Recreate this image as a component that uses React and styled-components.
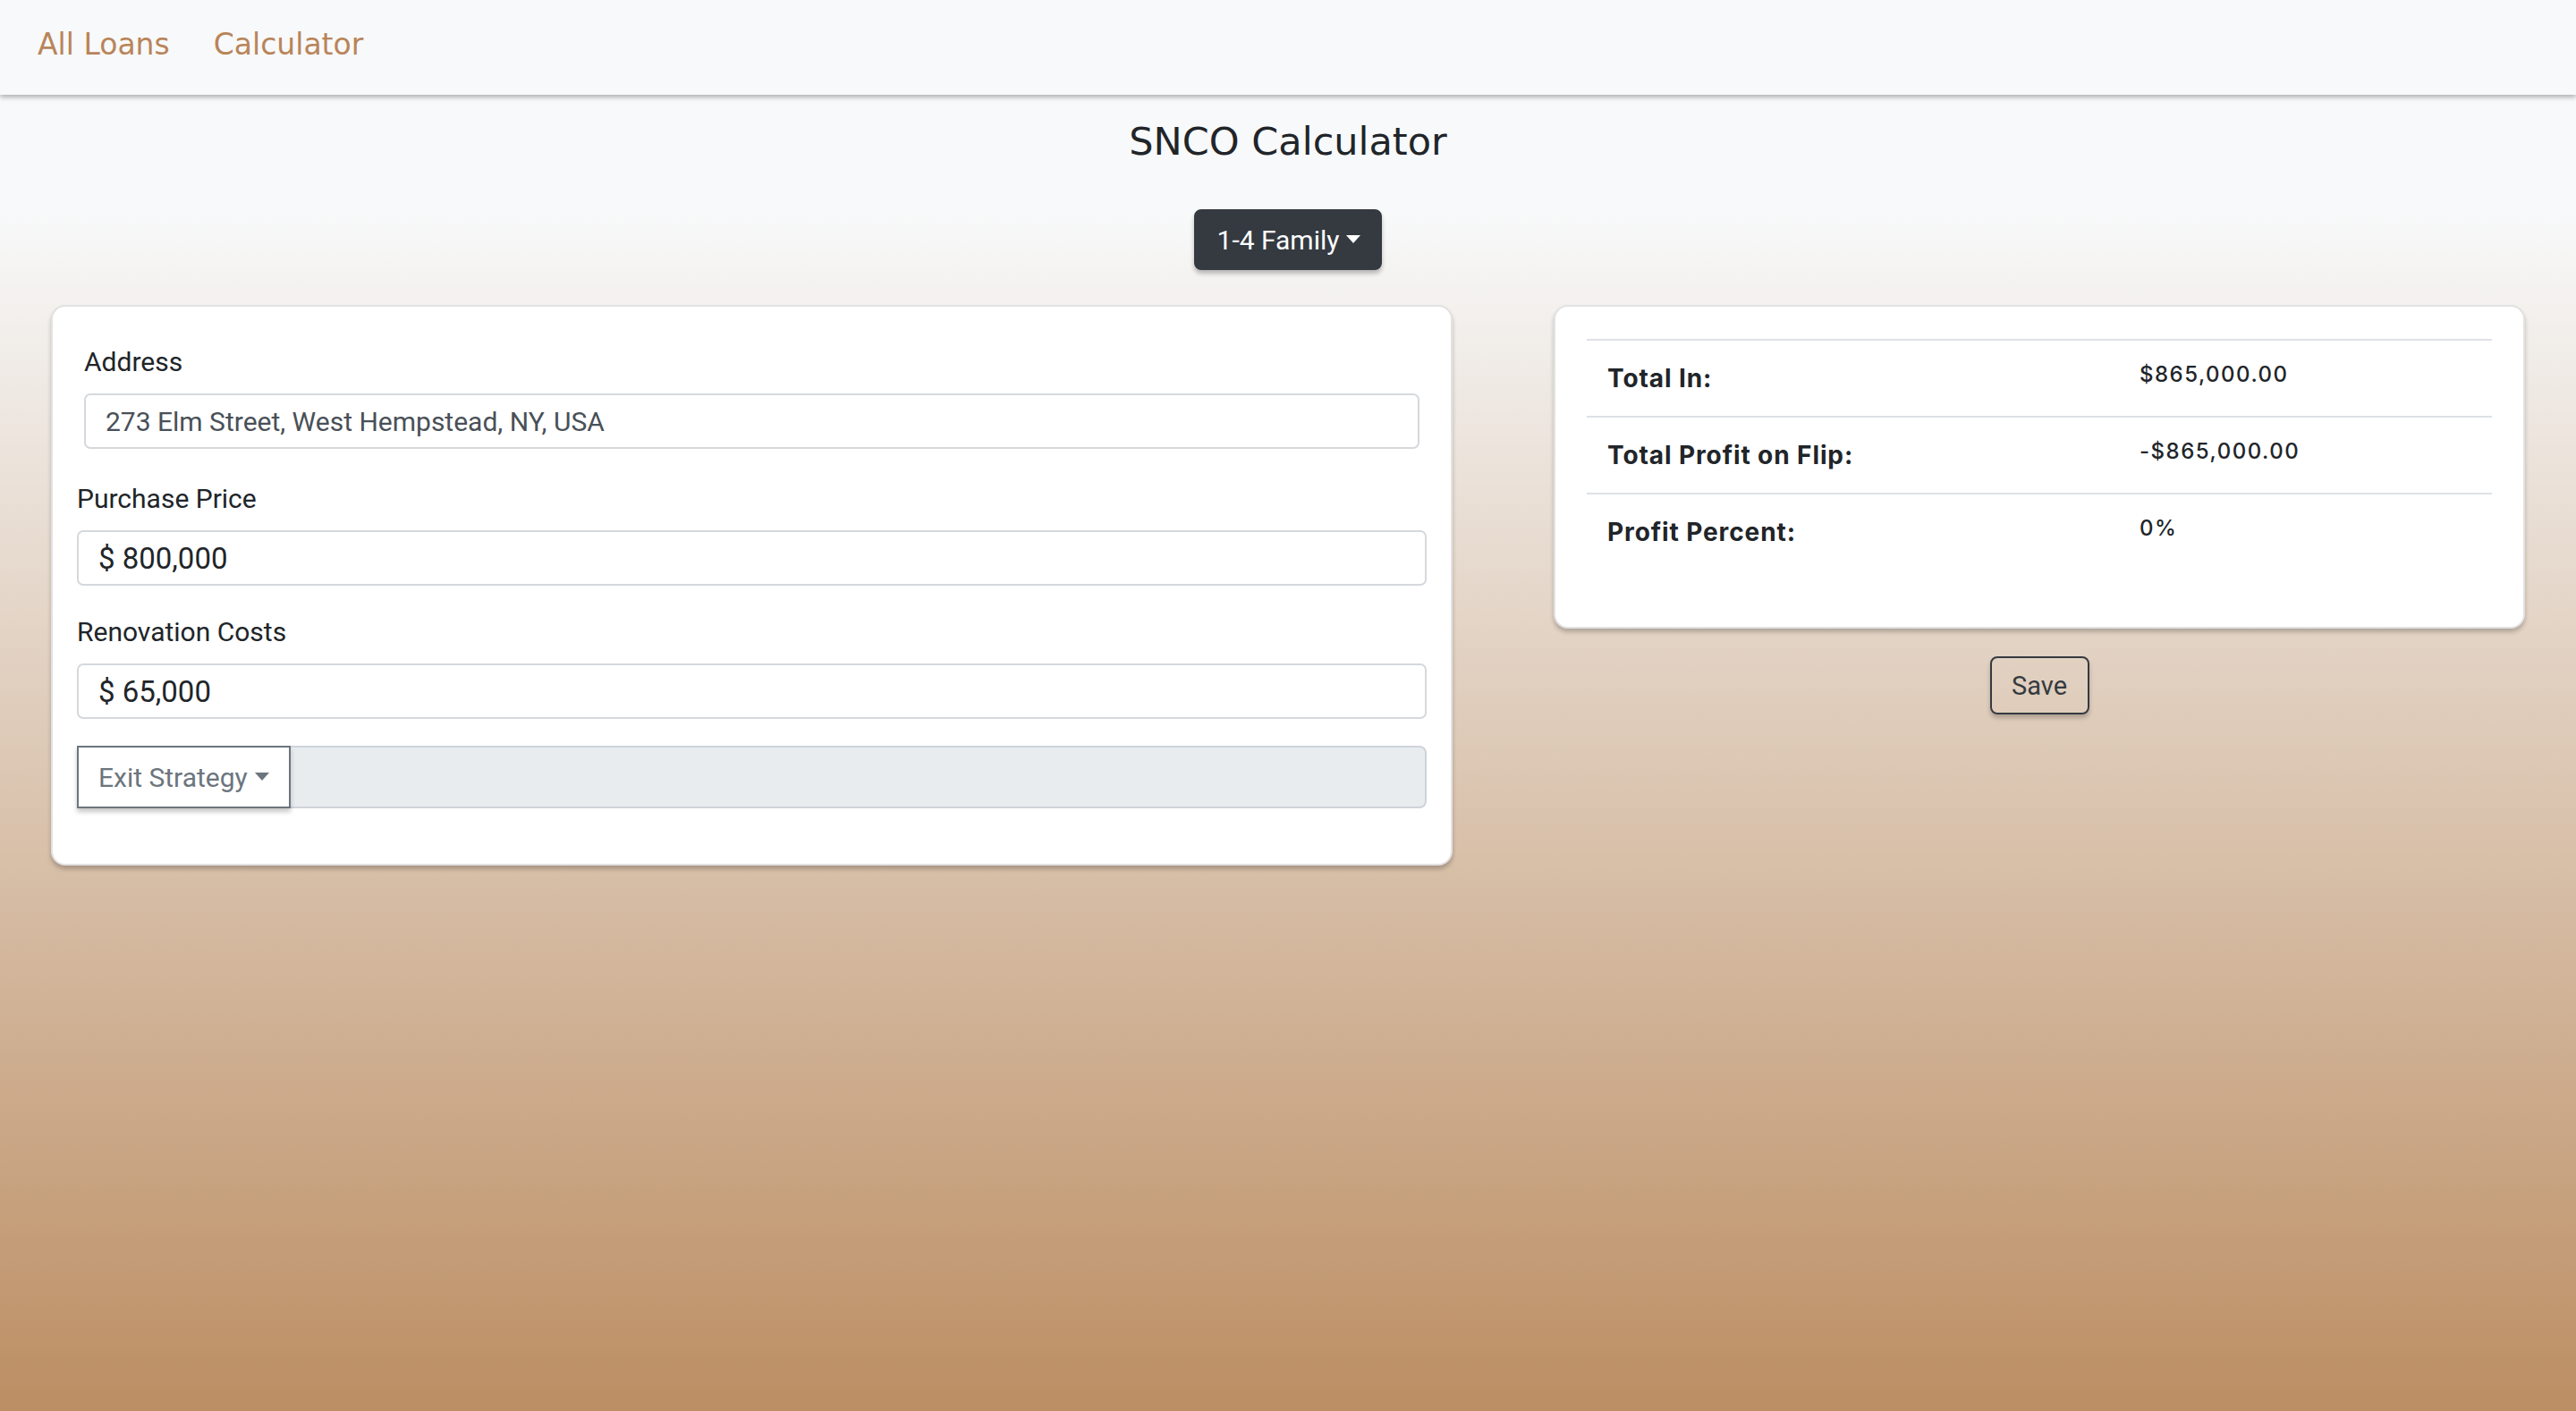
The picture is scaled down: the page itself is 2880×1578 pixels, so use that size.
import React from "react";
import styled, { createGlobalStyle } from "styled-components";

const GlobalStyle = createGlobalStyle`
  html, body { margin: 0; padding: 0; }
  body {
    font-family: Roboto, "Liberation Sans", sans-serif;
    color: #212529;
    background: #f8f9fa;
  }
  * { box-sizing: border-box; }
`;

const Page = styled.div`
  min-height: 100vh;
  background: linear-gradient(to bottom, #f8f9fa 0%, #f8f9fa 15%, #bc8e63 100%);
`;

const Navbar = styled.nav`
  height: 106px;
  background: #f8f9fa;
  box-shadow: 0 3px 5px rgba(0, 0, 0, 0.28);
  display: flex;
  align-items: flex-start;
  gap: 49px;
  padding: 30px 0 0 42px;
  position: relative;
  z-index: 2;
`;

const NavLink = styled.a`
  font-family: "DejaVu Sans", sans-serif;
  font-weight: 400;
  font-size: 33px;
  line-height: 40px;
  color: #b8855a;
  text-decoration: none;
`;

const Title = styled.h1`
  margin: 26px 0 0;
  text-align: center;
  font-family: "DejaVu Sans", sans-serif;
  font-weight: 500;
  font-size: 43px;
  line-height: 52px;
  color: #212529;
`;

const Center = styled.div`
  display: flex;
  justify-content: center;
  margin-top: 50px;
`;

const Caret = styled.span`
  display: inline-block;
  margin-left: 8px;
  vertical-align: 7px;
  border-top: 9px solid currentColor;
  border-left: 8px solid transparent;
  border-right: 8px solid transparent;
`;

const DarkButton = styled.button`
  height: 68px;
  padding: 0 22px 0 24px;
  background: #343a40;
  color: #fff;
  border: 2px solid #343a40;
  border-radius: 8px;
  font-family: Roboto, sans-serif;
  font-size: 30px;
  line-height: 45px;
  box-shadow: 0 4px 5px rgba(0, 0, 0, 0.25);
`;

const Columns = styled.div`
  display: grid;
  grid-template-columns: 1567fr 1086fr;
  column-gap: 113px;
  align-items: start;
  padding: 0 57px;
  margin-top: 39px;
`;

const Card = styled.section`
  background: #fff;
  border: 2px solid #e2e2e2;
  border-radius: 16px;
  box-shadow: 0 4px 5px rgba(0, 0, 0, 0.22);
  padding: ${(p) => p.$pad};
`;

const Group = styled.div`
  padding: ${(p) => (p.$inset ? "13px 8px 0" : "0")};
  margin-bottom: ${(p) => p.$mb}px;
`;

const Label = styled.label`
  display: block;
  font-size: 30px;
  line-height: 42px;
  margin-bottom: 14px;
  color: #212529;
`;

const Input = styled.div`
  height: 62px;
  display: flex;
  align-items: center;
  padding: 0 22px;
  border: 2px solid #d5d8dc;
  border-radius: 7px;
  background: #fff;
  font-size: ${(p) => (p.$muted ? 30 : 33)}px;
  color: ${(p) => (p.$muted ? "#495057" : "#212529")};
`;

const InputGroup = styled.div`
  display: flex;
  height: 70px;
  margin-bottom: 34px;
`;

const OutlineButton = styled.button`
  width: 239px;
  height: 100%;
  padding: 0 20px 0 22px;
  background: #fff;
  border: 2px solid #6c757d;
  border-radius: 0;
  color: #6c757d;
  font-family: Roboto, sans-serif;
  font-size: 30px;
  text-align: left;
  white-space: nowrap;
  box-shadow: 0 4px 5px rgba(0, 0, 0, 0.22);
  position: relative;
  z-index: 1;
`;

const Filler = styled.div`
  flex: 1;
  background: #e9ecef;
  border: 2px solid #ced4da;
  border-left: none;
  border-radius: 0 8px 8px 0;
`;

const Table = styled.div`
  display: flex;
  flex-direction: column;
`;

const Row = styled.div`
  display: grid;
  grid-template-columns: 618px 1fr;
  height: 86px;
  border-top: 2px solid #dee2e6;
`;

const Cell = styled.div`
  padding: 0 23px;
  font-family: Inter, Roboto, sans-serif;
  font-weight: 700;
  font-size: 28px;
  letter-spacing: 0.9px;
  display: flex;
  align-items: center;
  color: #212529;
`;

const Value = styled.div`
  padding: 21px 23px 0 0;
  font-family: Inter, Roboto, sans-serif;
  font-weight: 500;
  font-size: 24px;
  letter-spacing: 1.5px;
  line-height: 34px;
  color: #212529;
`;

const RightColumn = styled.div`
  display: flex;
  flex-direction: column;
  align-items: center;
`;

const RightCard = styled(Card)`
  align-self: stretch;
`;

const SaveButton = styled.button`
  margin-top: 31px;
  width: 111px;
  height: 65px;
  background: transparent;
  border: 2px solid #343a40;
  border-radius: 8px;
  color: #343a40;
  font-family: Roboto, sans-serif;
  font-size: 29px;
  box-shadow: 0 4px 5px rgba(0, 0, 0, 0.22);
`;

const results = [
  ["Total In:", "$865,000.00"],
  ["Total Profit on Flip:", "-$865,000.00"],
  ["Profit Percent:", "0%"],
];

export default function App() {
  return (
    <>
      <GlobalStyle />
      <Page>
        <Navbar>
          <NavLink href="#">All Loans</NavLink>
          <NavLink href="#">Calculator</NavLink>
        </Navbar>
        <Title>SNCO Calculator</Title>
        <Center>
          <DarkButton>
            1-4 Family
            <Caret />
          </DarkButton>
        </Center>
        <Columns>
          <Card $pad="28px 27px">
            <Group $inset $mb={35}>
              <Label>Address</Label>
              <Input $muted>273 Elm Street, West Hempstead, NY, USA</Input>
            </Group>
            <Group $mb={31}>
              <Label>Purchase Price</Label>
              <Input>$ 800,000</Input>
            </Group>
            <Group $mb={30}>
              <Label>Renovation Costs</Label>
              <Input>$ 65,000</Input>
            </Group>
            <InputGroup>
              <OutlineButton>
                Exit Strategy
                <Caret />
              </OutlineButton>
              <Filler />
            </InputGroup>
          </Card>
          <RightColumn>
            <RightCard $pad="36px 35px 64px 35px">
              <Table>
                {results.map(([label, value]) => (
                  <Row key={label}>
                    <Cell>{label}</Cell>
                    <Value>{value}</Value>
                  </Row>
                ))}
              </Table>
            </RightCard>
            <SaveButton>Save</SaveButton>
          </RightColumn>
        </Columns>
      </Page>
    </>
  );
}
